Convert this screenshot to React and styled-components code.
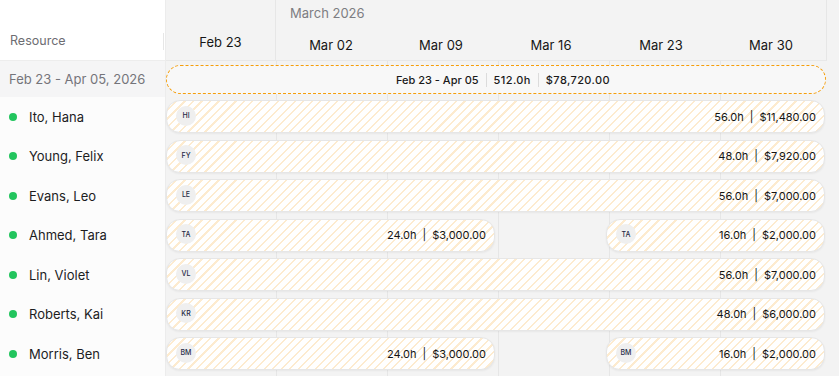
import React from "react";
import styled, { createGlobalStyle } from "styled-components";

const weeks = ["Feb 23", "Mar 02", "Mar 09", "Mar 16", "Mar 23", "Mar 30"];
const COL = 110;

const resources = [
  { name: "Ito, Hana", initials: "HI", bars: [{ from: 0, to: 6, hours: "56.0h", cost: "$11,480.00" }] },
  { name: "Young, Felix", initials: "FY", bars: [{ from: 0, to: 6, hours: "48.0h", cost: "$7,920.00" }] },
  { name: "Evans, Leo", initials: "LE", bars: [{ from: 0, to: 6, hours: "56.0h", cost: "$7,000.00" }] },
  {
    name: "Ahmed, Tara",
    initials: "TA",
    bars: [
      { from: 0, to: 3, hours: "24.0h", cost: "$3,000.00" },
      { from: 4, to: 6, hours: "16.0h", cost: "$2,000.00" },
    ],
  },
  { name: "Lin, Violet", initials: "VL", bars: [{ from: 0, to: 6, hours: "56.0h", cost: "$7,000.00" }] },
  { name: "Roberts, Kai", initials: "KR", bars: [{ from: 0, to: 6, hours: "48.0h", cost: "$6,000.00" }] },
  {
    name: "Morris, Ben",
    initials: "BM",
    bars: [
      { from: 0, to: 3, hours: "24.0h", cost: "$3,000.00" },
      { from: 4, to: 6, hours: "16.0h", cost: "$2,000.00" },
    ],
  },
];

const GlobalStyle = createGlobalStyle`
  body {
    margin: 0;
    font-family: Inter, "Noto Sans", sans-serif;
    background: #f3f3f3;
  }
`;

const Layout = styled.div`
  display: grid;
  grid-template-columns: 166px 1fr;
  width: 839px;
  height: 376px;
  overflow: hidden;
`;

const Side = styled.div`
  display: flex;
  flex-direction: column;
  background: #fcfcfc;
  border-right: 1px solid #ececec;
`;

const SideHeader = styled.div`
  height: 61px;
  background: #fff;
  border-bottom: 1px solid #ededed;
  display: flex;
  align-items: flex-end;
  padding: 0 0 12px 10px;
  box-sizing: border-box;
  color: #6d6d72;
  font-size: 12.5px;
  position: relative;
  &::after {
    content: "";
    position: absolute;
    right: 1px;
    top: 33px;
    height: 17px;
    width: 1px;
    background: #e6e6e6;
  }
`;

const SideSummary = styled.div`
  height: 36px;
  background: #f5f5f6;
  display: flex;
  align-items: center;
  padding-left: 9px;
  color: #74747a;
  font-size: 13px;
`;

const SideRow = styled.div`
  height: 39.5px;
  display: flex;
  align-items: center;
  padding-left: 9px;
  gap: 12px;
  color: #1d1d1f;
  font-size: 13px;
`;

const Dot = styled.span`
  width: 8px;
  height: 8px;
  border-radius: 50%;
  background: #22c55e;
`;

const Timeline = styled.div`
  display: flex;
  flex-direction: column;
  background-color: #f3f3f3;
  background-image: repeating-linear-gradient(
    90deg,
    transparent 0 110px,
    #e6e6e6 110px 111px
  );
  background-position: 0 0;
  background-size: ${COL * 6 + 1}px 100%;
  background-repeat: no-repeat;
`;

const HeaderArea = styled.div`
  height: 61px;
  width: ${COL * 6 + 1}px;
  border-bottom: 1px solid #e8e8e8;
  display: flex;
  flex-direction: column;
  background: #f3f3f3;
  box-sizing: border-box;
  border-right: 1px solid #e6e6e6;
`;

const MonthRow = styled.div`
  height: 28px;
  display: flex;
`;

const Month = styled.div`
  width: ${(p) => p.$span * COL}px;
  flex: none;
  padding: 5px 0 0 14px;
  color: #7d7d82;
  font-size: 13px;
  box-sizing: border-box;
`;

const WeekRow = styled.div`
  flex: 1;
  display: flex;
`;

const Week = styled.div`
  width: ${COL}px;
  flex: none;
  display: flex;
  align-items: center;
  justify-content: center;
  box-sizing: border-box;
  color: #161616;
  font-size: 13px;
  border-right: ${(p) => (p.$first ? "1px solid #e6e6e6" : "none")};
  margin-top: ${(p) => (p.$first ? "-28px" : "0")};
  height: ${(p) => (p.$first ? "61px" : "auto")};
  padding-top: ${(p) => (p.$first ? "24px" : "2px")};
`;

const Lane = styled.div`
  height: ${(p) => p.$h}px;
  position: relative;
  display: flex;
  align-items: center;
  width: ${COL * 6}px;
`;

const SummaryBar = styled.div`
  width: 100%;
  height: 29px;
  margin-top: 2px;
  box-sizing: border-box;
  border: 1px dashed #f59e0b;
  border-radius: 15px;
  background: #f8f8f8;
  display: flex;
  align-items: center;
  justify-content: center;
  padding-left: 14px;
  font-size: 11px;
  font-weight: 500;
  color: #1a1a1a;
`;

const SumPart = styled.span`
  padding: 0 7px;
  letter-spacing: ${(p) => (p.$num ? "0.4px" : "0")};
  & + & {
    border-left: 1px solid #dcdcdc;
  }
`;

const Bar = styled.div`
  position: absolute;
  top: 4px;
  height: 33px;
  box-sizing: border-box;
  border: 1px solid #e6e6e6;
  border-radius: 14px;
  background-color: #fff;
  background-image: repeating-linear-gradient(
    135deg,
    #fdebcf 0 1.5px,
    transparent 1.5px 6px
  );
  box-shadow: 0 1px 2px rgba(0, 0, 0, 0.05);
  display: flex;
  align-items: center;
  justify-content: space-between;
  padding: 0 8px 0 9px;
`;

const Avatar = styled.span`
  width: 20px;
  height: 20px;
  border-radius: 50%;
  background: #efefef;
  display: flex;
  align-items: center;
  justify-content: center;
  font-size: 7px;
  font-weight: 500;
  color: #1f2a44;
  margin-top: -2px;
`;

const Stats = styled.span`
  font-size: 11px;
  color: #141414;
  display: flex;
  gap: 6px;
`;

const Sep = styled.span`
  color: #141414;
`;

export default function App() {
  return (
    <>
      <GlobalStyle />
      <Layout>
        <Side>
          <SideHeader>Resource</SideHeader>
          <SideSummary>Feb 23 - Apr 05, 2026</SideSummary>
          {resources.map((r) => (
            <SideRow key={r.name}>
              <Dot />
              {r.name}
            </SideRow>
          ))}
        </Side>
        <Timeline>
          <HeaderArea>
            <MonthRow>
              <Month $span={1} />
              <Month $span={5}>March 2026</Month>
            </MonthRow>
            <WeekRow>
              {weeks.map((w, i) => (
                <Week key={w} $first={i === 0}>
                  {w}
                </Week>
              ))}
            </WeekRow>
          </HeaderArea>
          <Lane $h={35}>
            <SummaryBar>
              <SumPart>Feb 23 - Apr 05</SumPart>
              <SumPart $num>512.0h</SumPart>
              <SumPart $num>$78,720.00</SumPart>
            </SummaryBar>
          </Lane>
          {resources.map((r) => (
            <Lane key={r.name} $h={39.5}>
              {r.bars.map((b, i) => (
                <Bar
                  key={i}
                  style={{ left: b.from * COL, width: (b.to - b.from) * COL - 1 }}
                >
                  <Avatar>{r.initials}</Avatar>
                  <Stats>
                    {b.hours}
                    <Sep>|</Sep>
                    {b.cost}
                  </Stats>
                </Bar>
              ))}
            </Lane>
          ))}
        </Timeline>
      </Layout>
    </>
  );
}
